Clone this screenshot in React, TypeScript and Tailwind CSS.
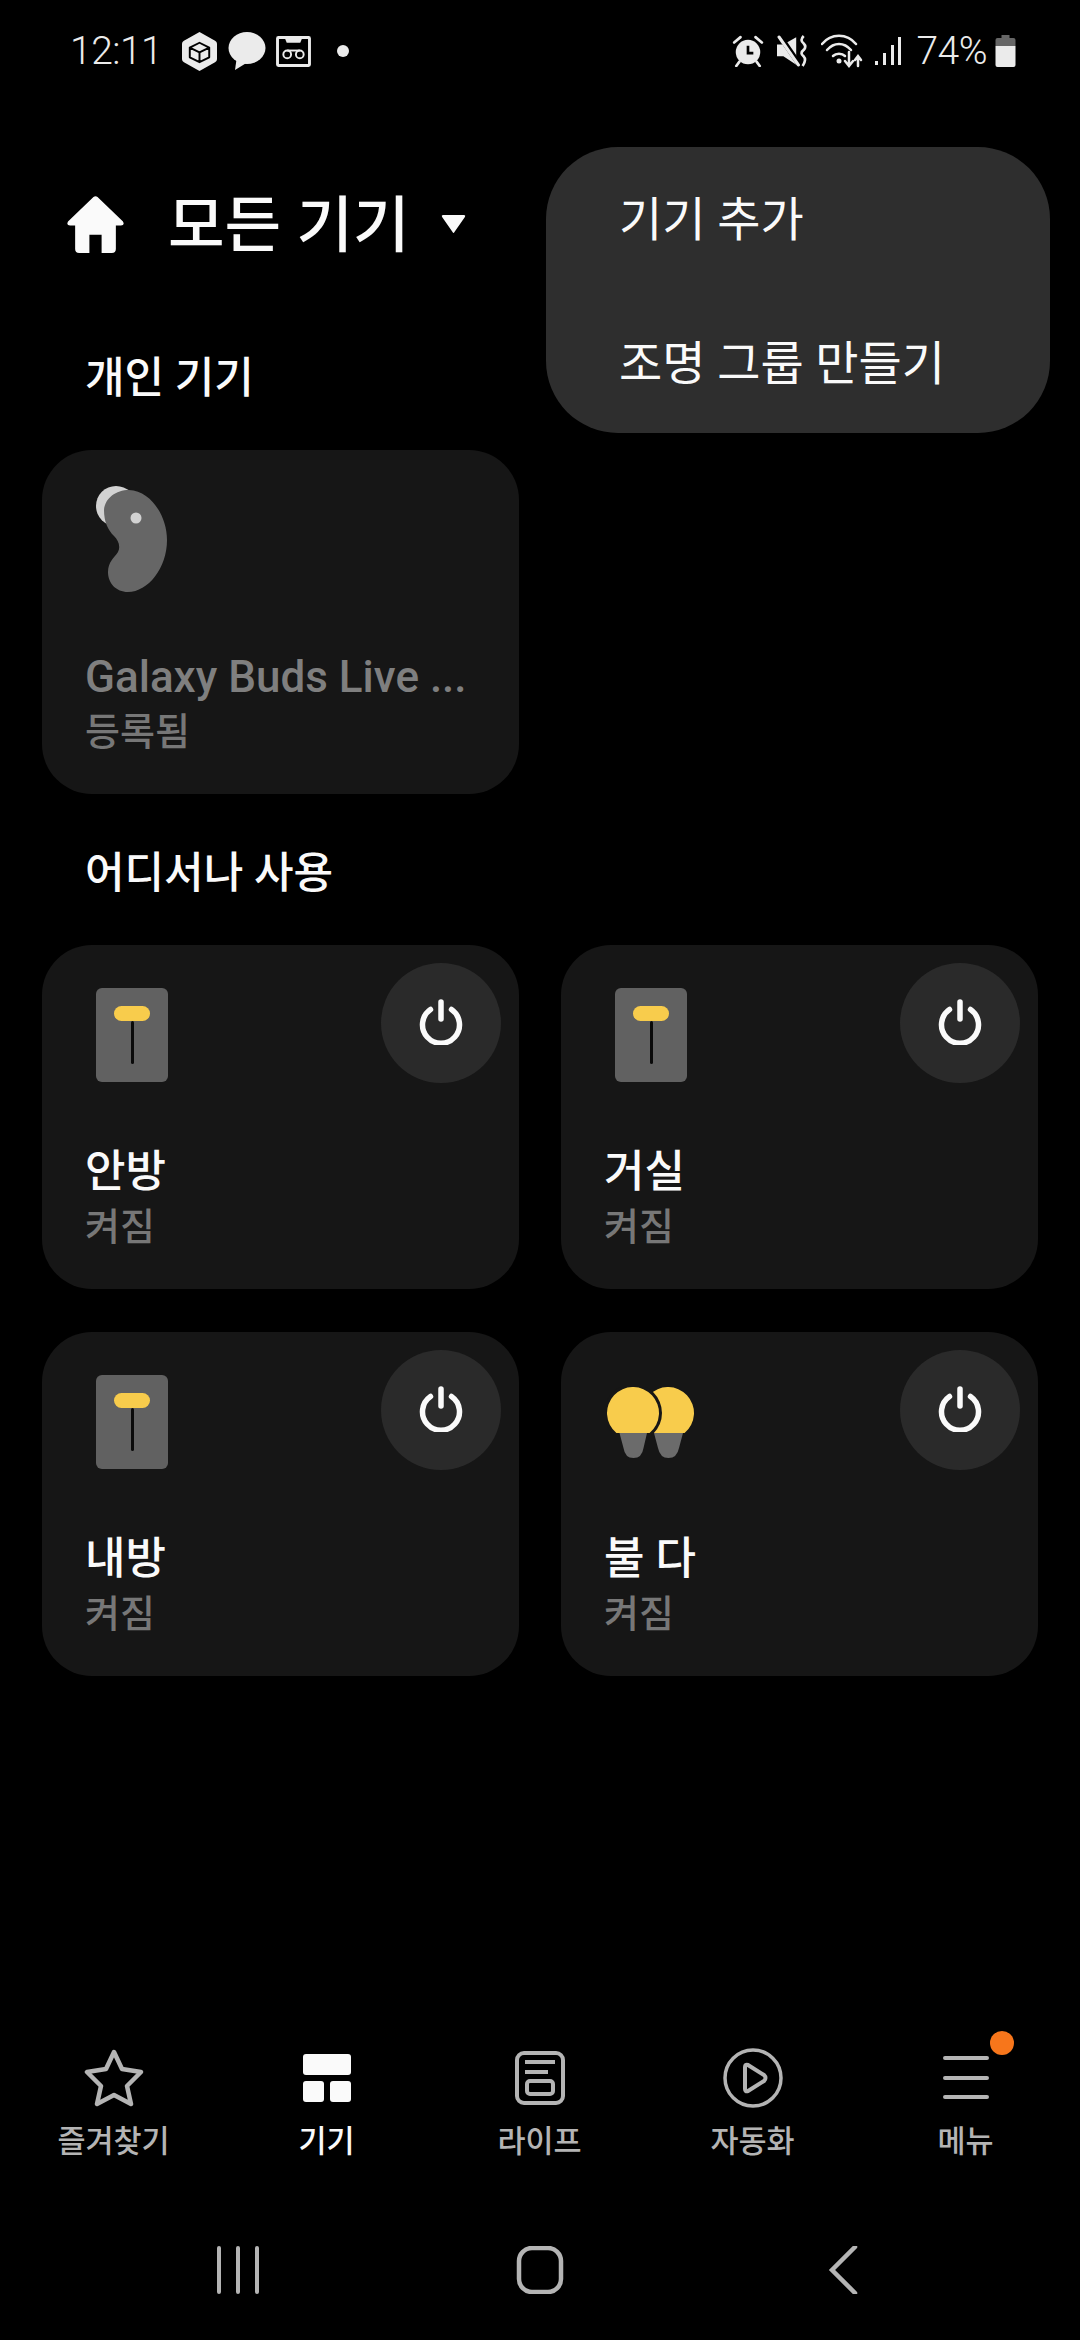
const KR = "font-['Roboto','Noto_Sans_CJK_KR',sans-serif]";

function Home() {
  return (
    <svg width="57" height="57" viewBox="0 0 56 56" className="block">
      <path fill="#fafafa" d="M26 1 Q28 -0.500 30 1 L55 25 Q57 29 53 29 H48 V52 Q48 56 44 56 H34 V38 H22 V56 H12 Q8 56 8 52 V29 H3 Q-1 29 1 25 Z" />
    </svg>
  );
}

function Power() {
  return (
    <div className="w-[120px] h-[120px] rounded-full bg-[#2a2a2a] flex items-center justify-center pb-[3px]">
      <svg width="44" height="46" viewBox="0 0 44 46" fill="none" stroke="#fafafa" strokeLinecap="round" strokeWidth="5.5">
        <path d="M11.5 10.5 A18.5 18.5 0 1 0 32.5 10.5" />
        <path d="M22 3 V20" />
      </svg>
    </div>
  );
}

function Switch() {
  return (
    <div className="w-[72px] h-[94px] rounded-[6px] bg-[#616161] flex flex-col items-center pt-[18px]">
      <div className="w-[36px] h-[15px] rounded-full bg-[#f8cc4c]" />
      <div className="w-[3px] h-[43px] rounded-full bg-[#0a0a0a]" />
    </div>
  );
}

function Bulbs() {
  return (
    <svg width="88" height="72" viewBox="0 0 88 72">
      <path fill="#f8cc4c" d="M44.400 46 A26 26 0 1 1 77.600 46 Z" />
      <path fill="#6b6b6b" d="M47 46 H76 L72 61 Q70 71 61.500 71 Q53 71 51 61 Z" />
      <circle cx="26" cy="26" r="29" fill="#161616" />
      <path fill="#f8cc4c" d="M9.400 46 A26 26 0 1 1 42.600 46 Z" />
      <rect x="0" y="46" width="44" height="10" fill="#161616" />
      <path fill="#6b6b6b" d="M12.500 46 H40 L36.500 61 Q35 71 26.500 71 Q18 71 16.500 61 Z" />
    </svg>
  );
}

function Bud() {
  return (
    <svg width="72" height="107" viewBox="0 0 72 107" className="block">
      <circle cx="20" cy="20" r="20" fill="#d2d2d2" />
      <path
        fill="#666666"
        d="M8 24 C9 12 20 4 33 4 C55 5 71 30 71 54 C71 82 52 106 32 106 C20 106 12 97 12 86 C12 76 18 72 22 66 C25 60 22 54 18 50 C12 44 8 36 8 24 Z"
      />
      <circle cx="40" cy="32" r="5.500" fill="#d2d2d2" />
    </svg>
  );
}

function Card({ icon, name, status, power, dim }: { icon: React.ReactNode; name: string; status: string; power?: boolean; dim?: boolean }) {
  return (
    <div className="relative h-[344px] w-[477px] rounded-[50px] bg-[#161616] pl-[43px] flex flex-col">
      <div className="h-[172px] pt-[36px] shrink-0">{icon}</div>
      <div className={`mt-[27px] text-[44px] leading-[56px] font-medium whitespace-nowrap ${dim ? "text-[#7f7f7f]" : "text-[#fafafa]"}`}>{name}</div>
      <div className="mt-[5px] text-[38px] leading-[44px] font-medium text-[#777777]">{status}</div>
      {power && <div className="absolute top-[18px] right-[18px]"><Power /></div>}
    </div>
  );
}

function StatusLeft() {
  return (
    <div className="flex items-center">
      <span className="text-[39px] leading-none font-light text-[#ebebeb] w-[112px] ml-[70px] tracking-[-0.5px]">12:11</span>
      <svg width="35" height="39" viewBox="0 0 36 40">
        <path fill="#ebebeb" d="M18 0 L34 9 Q36 10 36 12 V28 Q36 30 34 31 L18 40 L2 31 Q0 30 0 28 V12 Q0 10 2 9 Z" />
        <path fill="none" stroke="#000" strokeWidth="2" strokeLinejoin="round" d="M18 11 L28 16 V26 L18 31 L8 26 V16 Z M8 16 L18 21 L28 16 M18 21 V31" />
      </svg>
      <svg width="38" height="38" viewBox="0 0 38 38" className="ml-[11px]">
        <ellipse cx="19" cy="16" rx="18.500" ry="16" fill="#ebebeb" />
        <path fill="#ebebeb" d="M9 24 L7 38 L20 30 Z" />
      </svg>
      <svg width="35" height="31" viewBox="0 0 36 32" className="ml-[10px]">
        <rect x="1.500" y="1.500" width="33" height="29" rx="1" fill="none" stroke="#ebebeb" strokeWidth="3" />
        <path fill="#ebebeb" d="M9 2 H27 L25 7 H11 Z" />
        <circle cx="11.500" cy="19" r="4" fill="none" stroke="#ebebeb" strokeWidth="2" />
        <circle cx="24.500" cy="19" r="4" fill="none" stroke="#ebebeb" strokeWidth="2" />
        <path d="M11.500 15 H24.500" stroke="#ebebeb" strokeWidth="2" />
      </svg>
      <div className="w-[12px] h-[12px] rounded-full bg-[#ebebeb] ml-[26px]" />
    </div>
  );
}

function StatusRight() {
  return (
    <div className="flex items-center mr-[64px]">
      <svg width="32" height="32" viewBox="0 0 30 30">
        <circle cx="15" cy="16" r="11.500" fill="#ebebeb" />
        <path d="M15 10 V17 H20" fill="none" stroke="#000" strokeWidth="2.500" />
        <path d="M2 7 L8 2 M22 2 L28 7" stroke="#ebebeb" strokeWidth="2.500" strokeLinecap="round" />
        <path d="M7 25 L4 29 M23 25 L26 29" stroke="#ebebeb" strokeWidth="2.500" strokeLinecap="round" />
      </svg>
      <svg width="32" height="32" viewBox="0 0 30 30" className="ml-[13px]">
        <path fill="#ebebeb" d="M0 9 H6 L18 2 V28 L6 20 H0 Z" />
        <path d="M2 0 L22 29" stroke="#000" strokeWidth="5" />
        <path d="M2 2 L20 28" stroke="#ebebeb" strokeWidth="3" strokeLinecap="round" />
        <path d="M25 1 Q21 5 25 8 Q28 11 25 14 Q21 17 25 20 Q28 23 24 29" fill="none" stroke="#ebebeb" strokeWidth="2.500" />
      </svg>
      <svg width="44" height="34" viewBox="0 0 44 34" className="ml-[12px]">
        <g fill="none" stroke="#ebebeb" strokeWidth="2.500" strokeLinecap="round">
          <path d="M1 10 C10 -1 26 -1 35 10" />
          <path d="M6 16 C13 8 23 8 30 16" />
          <path d="M12 22 C15 19 21 19 24 22" />
          <path d="M28 18 V31 M24 27 L28 32 L32 27" />
          <path d="M37 32 V23 M34 26 L37 22 L40 26" />
        </g>
        <circle cx="18" cy="27" r="2.500" fill="#ebebeb" />
      </svg>
      <svg width="28" height="30" viewBox="0 0 28 30" className="ml-[9px]">
        <g fill="#ebebeb">
          <rect x="1" y="25" width="3" height="4" />
          <rect x="9" y="17" width="3" height="12" />
          <rect x="17" y="9" width="3" height="20" />
          <rect x="24" y="1" width="3" height="28" />
        </g>
      </svg>
      <span className="ml-[14px] text-[39px] leading-none font-light text-[#ebebeb] tracking-[-0.5px]">74%</span>
      <svg width="21" height="32" viewBox="0 0 20 32" className="ml-[8px]">
        <path fill="#666" d="M6 0 H14 V3 H18 Q20 3 20 5 V11 H0 V5 Q0 3 2 3 H6 Z" />
        <path fill="#ebebeb" d="M0 11 H20 V30 Q20 32 18 32 H2 Q0 32 0 30 Z" />
      </svg>
    </div>
  );
}

function Tab({ icon, label, active }: { icon: React.ReactNode; label: string; active?: boolean }) {
  return (
    <div className="relative w-[213px] flex flex-col items-center">
      <div className="h-[62px] flex items-center justify-center">{icon}</div>
      <div className={`mt-[13px] text-[30.5px] leading-[40px] font-medium ${active ? "text-[#fafafa]" : "text-[#b4b4b4]"}`}>{label}</div>
    </div>
  );
}

export default function App() {
  const stroke = "#b4b4b4";
  return (
    <div className={`relative w-[1080px] h-[2340px] bg-black overflow-hidden flex flex-col ${KR}`}>
      <div className="h-[102px] flex items-center justify-between shrink-0">
        <StatusLeft />
        <StatusRight />
      </div>

      <div className="h-[144px] flex items-center pl-[67px] shrink-0 mt-[50px]">
        <Home />
        <span className="ml-[44px] pt-[6px] text-[61.5px] leading-none font-medium text-[#fafafa] whitespace-nowrap">모든 기기</span>
        <svg width="27" height="19" viewBox="0 0 26 20" className="ml-[30px]">
          <path fill="#fafafa" d="M2 0 H24 Q26 0 25 2 L14 18 Q13 20 12 18 L1 2 Q0 0 2 0 Z" />
        </svg>
      </div>

      <div className="pl-[42px] mt-[45px]">
        <div className="pl-[43px] h-[76px] pt-[9px] text-[43px] leading-[56px] font-medium text-[#fafafa]">개인 기기</div>
        <div className="mt-[33px]">
          <Card icon={<div className="ml-[11px]"><Bud /></div>} name="Galaxy Buds Live ..." status="등록됨" dim />
        </div>
        <div className="pl-[43px] mt-[51px] h-[56px] text-[43px] leading-[56px] font-medium text-[#fafafa]">어디서나 사용</div>
        <div className="mt-[44px] grid grid-cols-[477px_477px] gap-x-[42px] gap-y-[43px]">
          <Card icon={<div className="ml-[11px] mt-[7px]"><Switch /></div>} name="안방" status="켜짐" power />
          <Card icon={<div className="ml-[11px] mt-[7px]"><Switch /></div>} name="거실" status="켜짐" power />
          <Card icon={<div className="ml-[11px] mt-[7px]"><Switch /></div>} name="내방" status="켜짐" power />
          <Card icon={<div className="mt-[19px] ml-[3px]"><Bulbs /></div>} name="불 다" status="켜짐" power />
        </div>
      </div>

      <div className="absolute left-[546px] top-[147px] w-[504px] h-[286px] rounded-[72px] bg-[#2e2e2e] pl-[73px] pt-[37px] text-[47px] leading-[72px] text-[#fafafa]">
        <div className="h-[144px]">기기 추가</div>
        <div>조명 그룹 만들기</div>
      </div>

      <div className="absolute left-0 right-0 top-[2047px] pl-[7px] flex">
        <Tab label="즐겨찾기" icon={
          <svg width="60" height="58" viewBox="0 0 60 58" fill="none" stroke={stroke} strokeWidth="4.500" strokeLinejoin="round">
            <path d="M30 3 L38 20 L57 23 L43 37 L47 55 L30 46 L13 55 L17 37 L3 23 L22 20 Z" />
          </svg>} />
        <Tab active label="기기" icon={
          <svg width="48" height="48" viewBox="0 0 48 48" fill="#fafafa">
            <rect x="0" y="0" width="48" height="21" rx="3" />
            <rect x="0" y="27" width="21" height="21" rx="3" />
            <rect x="27" y="27" width="21" height="21" rx="3" />
          </svg>} />
        <Tab label="라이프" icon={
          <svg width="50" height="54" viewBox="0 0 50 54" fill="none" stroke={stroke} strokeWidth="4">
            <rect x="2" y="2" width="46" height="50" rx="7" />
            <path d="M10 11 H40 M10 21 H33" />
            <rect x="12" y="30" width="26" height="13" rx="3" />
          </svg>} />
        <Tab label="자동화" icon={
          <svg width="60" height="60" viewBox="0 0 60 60" fill="none" stroke={stroke} strokeWidth="3.500" strokeLinejoin="round">
            <circle cx="30" cy="30" r="28" />
            <path d="M22 19 Q22 16 25 17 L41 27 Q44 30 41 33 L25 43 Q22 44 22 41 Z" strokeWidth="4" />
          </svg>} />
        <Tab label="메뉴" icon={
          <svg width="48" height="48" viewBox="0 0 48 48" stroke={stroke} strokeWidth="4" strokeLinecap="round">
            <path d="M3 4 H45 M3 24 H45 M3 43 H45" />
          </svg>} />
      </div>
      <div className="absolute left-[990px] top-[2031px] w-[24px] h-[24px] rounded-full bg-[#f7761b]" />

      <div className="absolute left-0 top-[2246px] w-full h-[48px]">
        <svg width="1080" height="48" viewBox="0 0 1080 48" fill="none" stroke={stroke} strokeLinecap="round">
          <path d="M219 2 V46 M238 2 V46 M257 2 V46" strokeWidth="4" />
          <rect x="519" y="2" width="42" height="44" rx="13" strokeWidth="4.500" />
          <path d="M855 1 L832 24 L855 47" strokeWidth="4.500" />
        </svg>
      </div>
    </div>
  );
}
